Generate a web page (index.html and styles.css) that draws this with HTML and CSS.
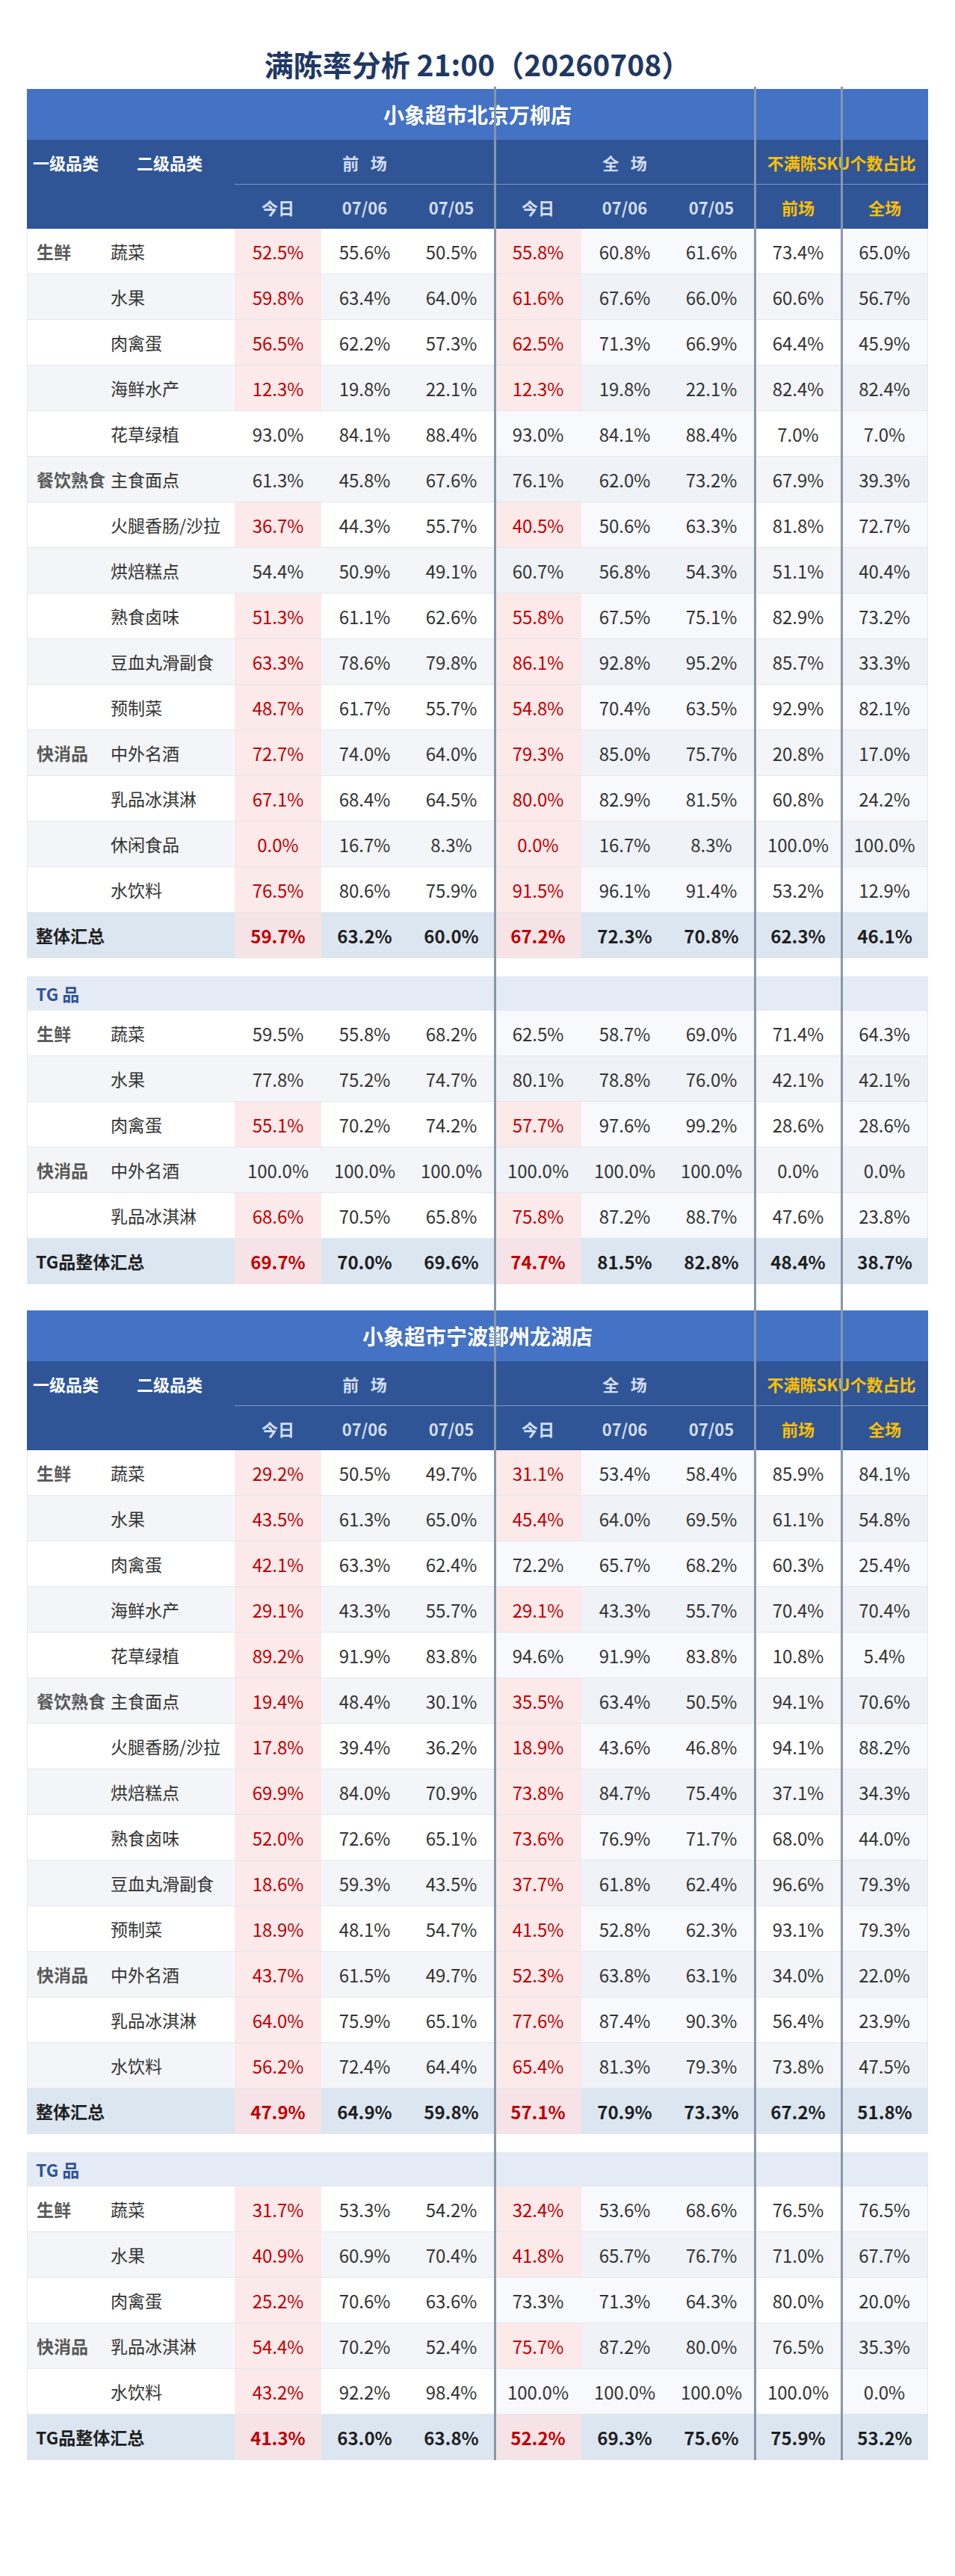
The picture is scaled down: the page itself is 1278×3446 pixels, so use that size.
FILE: index.html
```html
<!DOCTYPE html>
<html lang="zh-CN">
<head>
<meta charset="utf-8">
<title>满陈率分析</title>
<link rel="stylesheet" href="styles.css">
</head>
<body>
<div class="page">
  <h1 class="title">满陈率分析 21:00（20260708）</h1>
  <div class="board">
    <table class="grid">
      <colgroup><col class="k1"><col class="k2"><col span="8" class="kn"></colgroup>
      <thead>
        <tr class="h-store"><th colspan="10">小象超市北京万柳店</th></tr>
        <tr class="h-group"><th class="hc">一级品类</th><th class="hc">二级品类</th><th colspan="3" class="hg">前&ensp;&thinsp;场</th><th colspan="3" class="hg">全&ensp;&thinsp;场</th><th colspan="2" class="hy">不满陈SKU个数占比</th></tr>
        <tr class="h-sub"><th></th><th></th><th>今日</th><th>07/06</th><th>07/05</th><th>今日</th><th>07/06</th><th>07/05</th><th class="y">前场</th><th class="y">全场</th></tr>
      </thead>
      <tbody>
        <tr class="r"><td class="c1">生鲜</td><td class="c2">蔬菜</td><td class="bad">52.5%</td><td>55.6%</td><td>50.5%</td><td class="bad">55.8%</td><td class="w">60.8%</td><td class="w">61.6%</td><td>73.4%</td><td class="w">65.0%</td></tr>
        <tr class="r alt"><td class="c1"></td><td class="c2">水果</td><td class="bad">59.8%</td><td>63.4%</td><td>64.0%</td><td class="bad">61.6%</td><td class="w">67.6%</td><td class="w">66.0%</td><td>60.6%</td><td class="w">56.7%</td></tr>
        <tr class="r"><td class="c1"></td><td class="c2">肉禽蛋</td><td class="bad">56.5%</td><td>62.2%</td><td>57.3%</td><td class="bad">62.5%</td><td class="w">71.3%</td><td class="w">66.9%</td><td>64.4%</td><td class="w">45.9%</td></tr>
        <tr class="r alt"><td class="c1"></td><td class="c2">海鲜水产</td><td class="bad">12.3%</td><td>19.8%</td><td>22.1%</td><td class="bad">12.3%</td><td class="w">19.8%</td><td class="w">22.1%</td><td>82.4%</td><td class="w">82.4%</td></tr>
        <tr class="r"><td class="c1"></td><td class="c2">花草绿植</td><td>93.0%</td><td>84.1%</td><td>88.4%</td><td class="w">93.0%</td><td class="w">84.1%</td><td class="w">88.4%</td><td>7.0%</td><td class="w">7.0%</td></tr>
        <tr class="r alt"><td class="c1">餐饮熟食</td><td class="c2">主食面点</td><td>61.3%</td><td>45.8%</td><td>67.6%</td><td class="w">76.1%</td><td class="w">62.0%</td><td class="w">73.2%</td><td>67.9%</td><td class="w">39.3%</td></tr>
        <tr class="r"><td class="c1"></td><td class="c2">火腿香肠/沙拉</td><td class="bad">36.7%</td><td>44.3%</td><td>55.7%</td><td class="bad">40.5%</td><td class="w">50.6%</td><td class="w">63.3%</td><td>81.8%</td><td class="w">72.7%</td></tr>
        <tr class="r alt"><td class="c1"></td><td class="c2">烘焙糕点</td><td>54.4%</td><td>50.9%</td><td>49.1%</td><td class="w">60.7%</td><td class="w">56.8%</td><td class="w">54.3%</td><td>51.1%</td><td class="w">40.4%</td></tr>
        <tr class="r"><td class="c1"></td><td class="c2">熟食卤味</td><td class="bad">51.3%</td><td>61.1%</td><td>62.6%</td><td class="bad">55.8%</td><td class="w">67.5%</td><td class="w">75.1%</td><td>82.9%</td><td class="w">73.2%</td></tr>
        <tr class="r alt"><td class="c1"></td><td class="c2">豆血丸滑副食</td><td class="bad">63.3%</td><td>78.6%</td><td>79.8%</td><td class="bad">86.1%</td><td class="w">92.8%</td><td class="w">95.2%</td><td>85.7%</td><td class="w">33.3%</td></tr>
        <tr class="r"><td class="c1"></td><td class="c2">预制菜</td><td class="bad">48.7%</td><td>61.7%</td><td>55.7%</td><td class="bad">54.8%</td><td class="w">70.4%</td><td class="w">63.5%</td><td>92.9%</td><td class="w">82.1%</td></tr>
        <tr class="r alt"><td class="c1">快消品</td><td class="c2">中外名酒</td><td class="bad">72.7%</td><td>74.0%</td><td>64.0%</td><td class="bad">79.3%</td><td class="w">85.0%</td><td class="w">75.7%</td><td>20.8%</td><td class="w">17.0%</td></tr>
        <tr class="r"><td class="c1"></td><td class="c2">乳品冰淇淋</td><td class="bad">67.1%</td><td>68.4%</td><td>64.5%</td><td class="bad">80.0%</td><td class="w">82.9%</td><td class="w">81.5%</td><td>60.8%</td><td class="w">24.2%</td></tr>
        <tr class="r alt"><td class="c1"></td><td class="c2">休闲食品</td><td class="bad">0.0%</td><td>16.7%</td><td>8.3%</td><td class="bad">0.0%</td><td class="w">16.7%</td><td class="w">8.3%</td><td>100.0%</td><td class="w">100.0%</td></tr>
        <tr class="r"><td class="c1"></td><td class="c2">水饮料</td><td class="bad">76.5%</td><td>80.6%</td><td>75.9%</td><td class="bad">91.5%</td><td class="w">96.1%</td><td class="w">91.4%</td><td>53.2%</td><td class="w">12.9%</td></tr>
        <tr class="sum"><td colspan="2" class="lbl">整体汇总</td><td class="bad">59.7%</td><td>63.2%</td><td>60.0%</td><td class="bad">67.2%</td><td>72.3%</td><td>70.8%</td><td>62.3%</td><td>46.1%</td></tr>
        <tr class="gap"><td colspan="10"></td></tr>
        <tr class="tg"><td colspan="10">TG 品</td></tr>
        <tr class="r"><td class="c1">生鲜</td><td class="c2">蔬菜</td><td>59.5%</td><td>55.8%</td><td>68.2%</td><td class="w">62.5%</td><td class="w">58.7%</td><td class="w">69.0%</td><td>71.4%</td><td class="w">64.3%</td></tr>
        <tr class="r alt"><td class="c1"></td><td class="c2">水果</td><td>77.8%</td><td>75.2%</td><td>74.7%</td><td class="w">80.1%</td><td class="w">78.8%</td><td class="w">76.0%</td><td>42.1%</td><td class="w">42.1%</td></tr>
        <tr class="r"><td class="c1"></td><td class="c2">肉禽蛋</td><td class="bad">55.1%</td><td>70.2%</td><td>74.2%</td><td class="bad">57.7%</td><td class="w">97.6%</td><td class="w">99.2%</td><td>28.6%</td><td class="w">28.6%</td></tr>
        <tr class="r alt"><td class="c1">快消品</td><td class="c2">中外名酒</td><td>100.0%</td><td>100.0%</td><td>100.0%</td><td class="w">100.0%</td><td class="w">100.0%</td><td class="w">100.0%</td><td>0.0%</td><td class="w">0.0%</td></tr>
        <tr class="r"><td class="c1"></td><td class="c2">乳品冰淇淋</td><td class="bad">68.6%</td><td>70.5%</td><td>65.8%</td><td class="bad">75.8%</td><td class="w">87.2%</td><td class="w">88.7%</td><td>47.6%</td><td class="w">23.8%</td></tr>
        <tr class="sum"><td colspan="2" class="lbl">TG品整体汇总</td><td class="bad">69.7%</td><td>70.0%</td><td>69.6%</td><td class="bad">74.7%</td><td>81.5%</td><td>82.8%</td><td>48.4%</td><td>38.7%</td></tr>
      </tbody>
    </table>

    <table class="grid second">
      <colgroup><col class="k1"><col class="k2"><col span="8" class="kn"></colgroup>
      <thead>
        <tr class="h-store"><th colspan="10">小象超市宁波鄞州龙湖店</th></tr>
        <tr class="h-group"><th class="hc">一级品类</th><th class="hc">二级品类</th><th colspan="3" class="hg">前&ensp;&thinsp;场</th><th colspan="3" class="hg">全&ensp;&thinsp;场</th><th colspan="2" class="hy">不满陈SKU个数占比</th></tr>
        <tr class="h-sub"><th></th><th></th><th>今日</th><th>07/06</th><th>07/05</th><th>今日</th><th>07/06</th><th>07/05</th><th class="y">前场</th><th class="y">全场</th></tr>
      </thead>
      <tbody>
        <tr class="r"><td class="c1">生鲜</td><td class="c2">蔬菜</td><td class="bad">29.2%</td><td>50.5%</td><td>49.7%</td><td class="bad">31.1%</td><td class="w">53.4%</td><td class="w">58.4%</td><td>85.9%</td><td class="w">84.1%</td></tr>
        <tr class="r alt"><td class="c1"></td><td class="c2">水果</td><td class="bad">43.5%</td><td>61.3%</td><td>65.0%</td><td class="bad">45.4%</td><td class="w">64.0%</td><td class="w">69.5%</td><td>61.1%</td><td class="w">54.8%</td></tr>
        <tr class="r"><td class="c1"></td><td class="c2">肉禽蛋</td><td class="bad">42.1%</td><td>63.3%</td><td>62.4%</td><td class="w">72.2%</td><td class="w">65.7%</td><td class="w">68.2%</td><td>60.3%</td><td class="w">25.4%</td></tr>
        <tr class="r alt"><td class="c1"></td><td class="c2">海鲜水产</td><td class="bad">29.1%</td><td>43.3%</td><td>55.7%</td><td class="bad">29.1%</td><td class="w">43.3%</td><td class="w">55.7%</td><td>70.4%</td><td class="w">70.4%</td></tr>
        <tr class="r"><td class="c1"></td><td class="c2">花草绿植</td><td class="bad">89.2%</td><td>91.9%</td><td>83.8%</td><td class="w">94.6%</td><td class="w">91.9%</td><td class="w">83.8%</td><td>10.8%</td><td class="w">5.4%</td></tr>
        <tr class="r alt"><td class="c1">餐饮熟食</td><td class="c2">主食面点</td><td class="bad">19.4%</td><td>48.4%</td><td>30.1%</td><td class="bad">35.5%</td><td class="w">63.4%</td><td class="w">50.5%</td><td>94.1%</td><td class="w">70.6%</td></tr>
        <tr class="r"><td class="c1"></td><td class="c2">火腿香肠/沙拉</td><td class="bad">17.8%</td><td>39.4%</td><td>36.2%</td><td class="bad">18.9%</td><td class="w">43.6%</td><td class="w">46.8%</td><td>94.1%</td><td class="w">88.2%</td></tr>
        <tr class="r alt"><td class="c1"></td><td class="c2">烘焙糕点</td><td class="bad">69.9%</td><td>84.0%</td><td>70.9%</td><td class="bad">73.8%</td><td class="w">84.7%</td><td class="w">75.4%</td><td>37.1%</td><td class="w">34.3%</td></tr>
        <tr class="r"><td class="c1"></td><td class="c2">熟食卤味</td><td class="bad">52.0%</td><td>72.6%</td><td>65.1%</td><td class="bad">73.6%</td><td class="w">76.9%</td><td class="w">71.7%</td><td>68.0%</td><td class="w">44.0%</td></tr>
        <tr class="r alt"><td class="c1"></td><td class="c2">豆血丸滑副食</td><td class="bad">18.6%</td><td>59.3%</td><td>43.5%</td><td class="bad">37.7%</td><td class="w">61.8%</td><td class="w">62.4%</td><td>96.6%</td><td class="w">79.3%</td></tr>
        <tr class="r"><td class="c1"></td><td class="c2">预制菜</td><td class="bad">18.9%</td><td>48.1%</td><td>54.7%</td><td class="bad">41.5%</td><td class="w">52.8%</td><td class="w">62.3%</td><td>93.1%</td><td class="w">79.3%</td></tr>
        <tr class="r alt"><td class="c1">快消品</td><td class="c2">中外名酒</td><td class="bad">43.7%</td><td>61.5%</td><td>49.7%</td><td class="bad">52.3%</td><td class="w">63.8%</td><td class="w">63.1%</td><td>34.0%</td><td class="w">22.0%</td></tr>
        <tr class="r"><td class="c1"></td><td class="c2">乳品冰淇淋</td><td class="bad">64.0%</td><td>75.9%</td><td>65.1%</td><td class="bad">77.6%</td><td class="w">87.4%</td><td class="w">90.3%</td><td>56.4%</td><td class="w">23.9%</td></tr>
        <tr class="r alt"><td class="c1"></td><td class="c2">水饮料</td><td class="bad">56.2%</td><td>72.4%</td><td>64.4%</td><td class="bad">65.4%</td><td class="w">81.3%</td><td class="w">79.3%</td><td>73.8%</td><td class="w">47.5%</td></tr>
        <tr class="sum"><td colspan="2" class="lbl">整体汇总</td><td class="bad">47.9%</td><td>64.9%</td><td>59.8%</td><td class="bad">57.1%</td><td>70.9%</td><td>73.3%</td><td>67.2%</td><td>51.8%</td></tr>
        <tr class="gap"><td colspan="10"></td></tr>
        <tr class="tg"><td colspan="10">TG 品</td></tr>
        <tr class="r"><td class="c1">生鲜</td><td class="c2">蔬菜</td><td class="bad">31.7%</td><td>53.3%</td><td>54.2%</td><td class="bad">32.4%</td><td class="w">53.6%</td><td class="w">68.6%</td><td>76.5%</td><td class="w">76.5%</td></tr>
        <tr class="r alt"><td class="c1"></td><td class="c2">水果</td><td class="bad">40.9%</td><td>60.9%</td><td>70.4%</td><td class="bad">41.8%</td><td class="w">65.7%</td><td class="w">76.7%</td><td>71.0%</td><td class="w">67.7%</td></tr>
        <tr class="r"><td class="c1"></td><td class="c2">肉禽蛋</td><td class="bad">25.2%</td><td>70.6%</td><td>63.6%</td><td class="w">73.3%</td><td class="w">71.3%</td><td class="w">64.3%</td><td>80.0%</td><td class="w">20.0%</td></tr>
        <tr class="r alt"><td class="c1">快消品</td><td class="c2">乳品冰淇淋</td><td class="bad">54.4%</td><td>70.2%</td><td>52.4%</td><td class="bad">75.7%</td><td class="w">87.2%</td><td class="w">80.0%</td><td>76.5%</td><td class="w">35.3%</td></tr>
        <tr class="r"><td class="c1"></td><td class="c2">水饮料</td><td class="bad">43.2%</td><td>92.2%</td><td>98.4%</td><td class="w">100.0%</td><td class="w">100.0%</td><td class="w">100.0%</td><td>100.0%</td><td class="w">0.0%</td></tr>
        <tr class="sum"><td colspan="2" class="lbl">TG品整体汇总</td><td class="bad">41.3%</td><td>63.0%</td><td>63.8%</td><td class="bad">52.2%</td><td>69.3%</td><td>75.6%</td><td>75.9%</td><td>53.2%</td></tr>
      </tbody>
    </table>

    <div class="vline v1"></div>
    <div class="vline v2"></div>
    <div class="vline v3"></div>
  </div>
</div>
</body>
</html>
```

FILE: styles.css
```css
* { box-sizing: border-box; }

html, body {
  margin: 0;
  padding: 0;
  background: #ffffff;
}

body {
  font-family: "Noto Sans CJK SC", "Noto Sans", "Liberation Sans", sans-serif;
  color: #333333;
}

.page {
  width: 1278px;
  padding: 61px 36px 0;
}

.title {
  margin: 0 0 10px;
  text-align: center;
  font-size: 39px;
  line-height: 48px;
  font-weight: 700;
  color: #1f3864;
}

.board {
  position: relative;
  width: 1206px;
}

.grid {
  width: 1206px;
  table-layout: fixed;
  border-collapse: separate;
  border-spacing: 0;
}

.grid.second {
  margin-top: 35px;
}

.k1 { width: 104px; }
.k2 { width: 174px; }
.kn { width: 116px; }

/* header */
.grid th {
  padding: 0;
  font-weight: 700;
  white-space: nowrap;
}

.h-store th {
  height: 68px;
  background: #4472c4;
  color: #ffffff;
  font-size: 28px;
  text-align: center;
}

.h-group th,
.h-sub th {
  background: #2f5597;
  color: #d3def3;
  font-size: 22px;
  text-align: center;
}

.h-group th { height: 60px; }
.h-sub th { height: 59px; }

.h-group th.hc { color: #ffffff; }
.h-group th.hg,
.h-group th.hy {
  border-bottom: 1px solid #7e96c4;
}
.h-group th.hy,
.h-sub th.y { color: #ffc000; }

/* body rows */
.grid td {
  padding: 0;
  height: 61px;
  font-size: 24px;
  text-align: center;
  white-space: nowrap;
  color: #333333;
  border-bottom: 1px solid #e4e7ec;
}

.r td { background: #ffffff; }
.r.alt td { background: #f4f5f8; }
.r td.w { background: #f8f9fc; }
.r.alt td.w { background: #eff2f6; }

.r td:first-child { border-left: 1px solid #e4e7ec; }
.r td:last-child { border-right: 1px solid #e4e7ec; }

.grid td.c1 {
  text-align: left;
  padding-left: 12px;
  font-weight: 700;
  color: #595959;
  font-size: 23px;
}

.grid td.c2 {
  text-align: left;
  padding-left: 8px;
  font-size: 23px;
  color: #333333;
}

.r td.bad {
  background: #fce9ea;
  color: #c00000;
}

.sum td {
  background: #dce6f1;
  font-weight: 700;
  color: #1f1f1f;
}

.sum td.lbl {
  text-align: left;
  padding-left: 12px;
  font-size: 23px;
}

.sum td.bad {
  background: #f6e3e7;
  color: #c00000;
}

.gap td {
  height: 24px;
  background: #ffffff;
  border-bottom: none;
}

.tg td {
  height: 46px;
  background: #e5ebf4;
  text-align: left;
  padding-left: 12px;
  font-size: 23px;
  font-weight: 700;
  color: #2f5597;
}

/* overlay column dividers */
.vline {
  position: absolute;
  top: -3px;
  bottom: 0;
  width: 3px;
  background: #8797aa;
}

.v1 { left: 625px; }
.v2 { left: 973px; }
.v3 { left: 1089px; }
```
